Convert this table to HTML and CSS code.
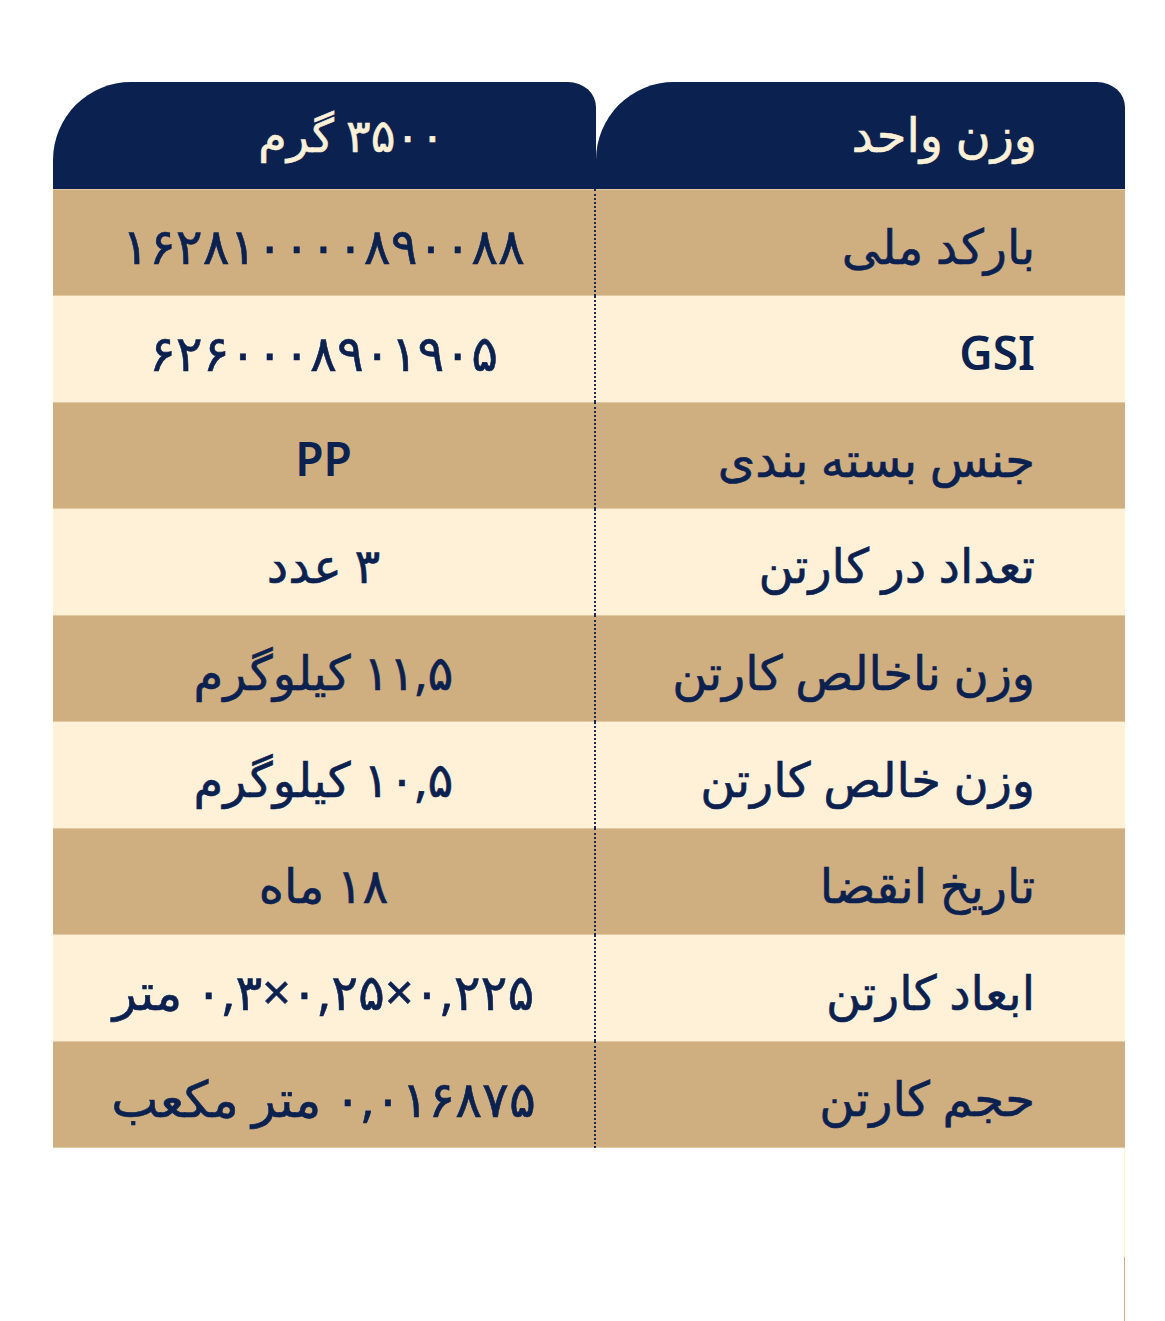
FILE: index.html
```html
<!DOCTYPE html>
<html lang="fa">
<head>
<meta charset="utf-8">
<link rel="stylesheet" href="styles.css">
</head>
<body>
<div class="page">
  <div class="header" dir="rtl">
    <div class="head head-label">وزن واحد</div>
    <div class="head head-value">۳۵۰۰ گرم</div>
  </div>
  <div class="table" dir="rtl">
    <div class="cell label tan">بارکد ملی</div>
    <div class="cell value tan wide">۱۶۲۸۱۰۰۰۰۸۹۰۰۸۸</div>

    <div class="cell label cream latin">GSI</div>
    <div class="cell value cream wide">۶۲۶۰۰۰۸۹۰۱۹۰۵</div>

    <div class="cell label tan">جنس بسته بندی</div>
    <div class="cell value tan latin">PP</div>

    <div class="cell label cream">تعداد در کارتن</div>
    <div class="cell value cream">۳ عدد</div>

    <div class="cell label tan">وزن ناخالص کارتن</div>
    <div class="cell value tan">۱۱,۵ کیلوگرم</div>

    <div class="cell label cream">وزن خالص کارتن</div>
    <div class="cell value cream">۱۰,۵ کیلوگرم</div>

    <div class="cell label tan">تاریخ انقضا</div>
    <div class="cell value tan">۱۸ ماه</div>

    <div class="cell label cream">ابعاد کارتن</div>
    <div class="cell value cream wide">۰,۲۲۵×۰,۲۵×۰,۳ متر</div>

    <div class="cell label tan">حجم کارتن</div>
    <div class="cell value tan wide">۰,۰۱۶۸۷۵ متر مکعب</div>
  </div>
  <div class="edge">
    <div class="edge-cream"></div>
    <div class="edge-tan"></div>
  </div>
</div>
</body>
</html>
```

FILE: styles.css
```css
html, body {
  margin: 0;
  padding: 0;
  background: #ffffff;
}

.page {
  padding-top: 82px;
  padding-left: 53px;
  width: 1072px;
}

.header {
  display: flex;
  height: 107px;
  font-family: "Noto Sans", "DejaVu Sans", sans-serif;
}

.head {
  background: #0b2150;
  color: #fff1d8;
  border-radius: 78px 28px 0 0 / 78px 25px 0 0;
  display: flex;
  align-items: center;
  font-size: 48px;
  -webkit-text-stroke: 0.6px #fff1d8;
  padding-bottom: 4px;
  box-sizing: border-box;
}

.head-label {
  width: 529px;
  justify-content: flex-start;
  padding-right: 88px;
}

.head-value {
  width: 543px;
  justify-content: center;
  padding-left: 54px;
  font-size: 46px;
}

.table {
  display: grid;
  grid-template-columns: 531px 541px;
  grid-auto-rows: 106.55px;
  font-family: "Noto Sans", "DejaVu Sans", sans-serif;
  color: #0b2150;
}

.cell {
  display: flex;
  align-items: center;
  font-size: 48px;
  -webkit-text-stroke: 0.6px #0b2150;
  padding-top: 6px;
  box-sizing: border-box;
}

.label {
  padding-right: 90px;
  justify-content: flex-start;
  border-left: 2px dotted #1c2b55;
}

.value {
  justify-content: center;
}

.wide {
  font-size: 50px;
}

.latin {
  font-weight: 600;
  font-size: 46px;
  -webkit-text-stroke: 0;
}

.tan {
  background: #cfae80;
  box-shadow: inset 0 1px 0 #e2c9a0, inset 0 -1px 0 #e2c9a0;
}

.cream {
  background: #fff1d8;
}

.edge {
  display: flex;
  flex-direction: column;
  margin-left: 1071px;
  width: 1px;
}

.edge-cream {
  height: 109px;
  background: #fff1d8;
}

.edge-tan {
  height: 64px;
  background: #cfae80;
}
```
